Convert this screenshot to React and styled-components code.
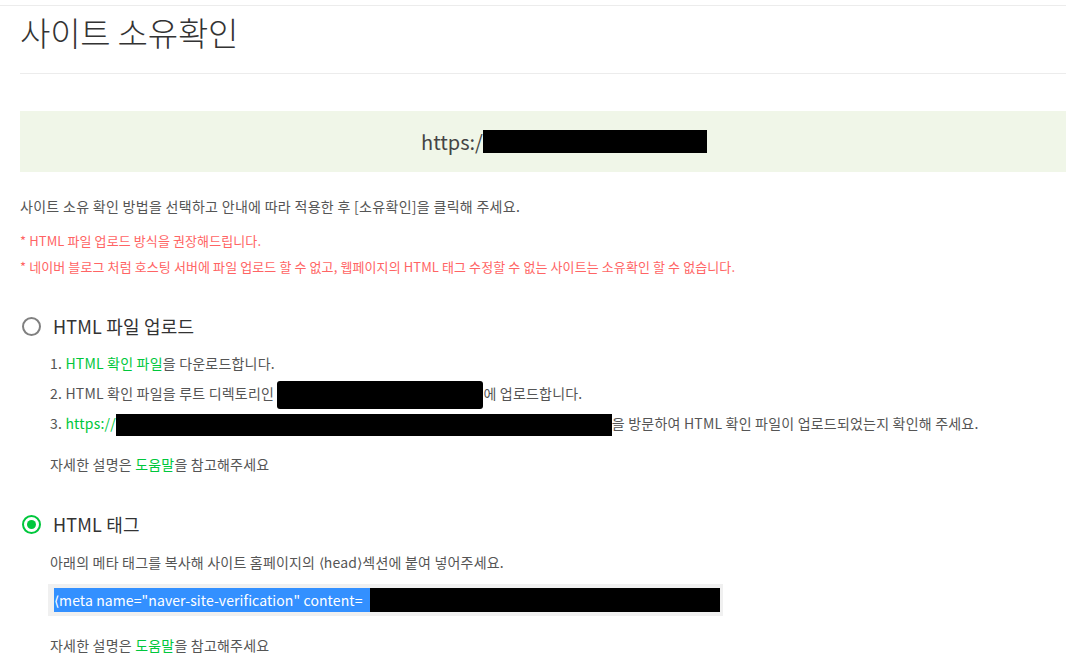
import React from 'react'
import styled, { createGlobalStyle } from 'styled-components'

const GlobalStyle = createGlobalStyle`
  body {
    margin: 0;
    background: #fff;
    font-family: "Noto Sans CJK KR", "Noto Sans", sans-serif;
  }
`

const Page = styled.div`
  margin-top: 5px;
  width: 1066px;
  border-top: 1px solid #ececec;
  padding-left: 20px;
  box-sizing: border-box;
`

const Header = styled.div`
  padding: 6px 0 21px;
  border-bottom: 1px solid #ececec;
`

const Title = styled.h1`
  margin: 0;
  font-size: 33px;
  line-height: 40px;
  font-weight: 300;
  color: #333;
  letter-spacing: -0.2px;
`

const UrlBox = styled.div`
  margin-top: 37px;
  height: 61px;
  background: #f0f6e8;
  display: flex;
  align-items: center;
  justify-content: center;
  padding-left: 42px;
  font-size: 20px;
  color: #444;
`

const Redact = styled.span`
  display: inline-block;
  background: #000;
  width: ${p => p.w}px;
  height: ${p => p.h}px;
  border-radius: ${p => (p.round ? '3px' : '0')};
  vertical-align: middle;
`

const Desc = styled.p`
  margin: 24px 0 0;
  font-size: 14px;
  line-height: 20px;
  color: #555;
  letter-spacing: 0.3px;
`

const Notes = styled.ul`
  list-style: none;
  margin: 12px 0 0;
  padding: 0;
`

const Note = styled.li`
  font-size: 13px;
  line-height: 26px;
  color: #ff6464;
  letter-spacing: 0.1px;
`

const Option = styled.div`
  margin-top: ${p => p.top}px;
`

const RadioRow = styled.label`
  display: flex;
  align-items: center;
  gap: 12px;
  height: 30px;
  font-size: 18px;
  color: #333;
  letter-spacing: 0.2px;
`

const Radio = styled.span`
  width: 19px;
  height: 19px;
  margin-left: 2px;
  box-sizing: border-box;
  border-radius: 50%;
  border: 2px solid ${p => (p.checked ? '#00c73c' : '#808080')};
  display: flex;
  align-items: center;
  justify-content: center;
  &::after {
    content: '';
    display: ${p => (p.checked ? 'block' : 'none')};
    width: 9px;
    height: 9px;
    border-radius: 50%;
    background: #00c73c;
  }
`

const Body = styled.div`
  padding-left: 30px;
`

const Steps = styled.ol`
  list-style: none;
  margin: 7px 0 0;
  padding: 0;
`

const Step = styled.li`
  font-size: 14px;
  line-height: 30px;
  height: 30px;
  color: #555;
  letter-spacing: 0.2px;
  white-space: nowrap;
`

const Green = styled.span`
  color: #00c73c;
`

const Help = styled.p`
  margin: ${p => p.top}px 0 0;
  font-size: 14px;
  line-height: 20px;
  color: #555;
  letter-spacing: 0.2px;
`

const CodeBox = styled.div`
  margin: 12px 0 0 -2px;
  width: 675px;
  height: 32px;
  box-sizing: border-box;
  background: #f0f0f0;
  padding: 4px 3px 4px 6px;
  display: flex;
  align-items: center;
`

const Selected = styled.span`
  background: #3390ff;
  color: #fff;
  font-size: 14px;
  line-height: 24px;
  letter-spacing: 0.1px;
  width: 316px;
  white-space: nowrap;
`

export default function App() {
  return (
    <>
      <GlobalStyle />
      <Page>
        <Header>
          <Title>사이트 소유확인</Title>
        </Header>

        <UrlBox>
          https:/<Redact w={224} h={23} />
        </UrlBox>

        <Desc>사이트 소유 확인 방법을 선택하고 안내에 따라 적용한 후 [소유확인]을 클릭해 주세요.</Desc>

        <Notes>
          <Note>* HTML 파일 업로드 방식을 권장해드립니다.</Note>
          <Note>* 네이버 블로그 처럼 호스팅 서버에 파일 업로드 할 수 없고, 웹페이지의 HTML 태그 수정할 수 없는 사이트는 소유확인 할 수 없습니다.</Note>
        </Notes>

        <Option top={31}>
          <RadioRow>
            <Radio />
            HTML 파일 업로드
          </RadioRow>
          <Body>
            <Steps>
              <Step>1. <Green>HTML 확인 파일</Green>을 다운로드합니다.</Step>
              <Step>2. HTML 확인 파일을 루트 디렉토리인 <Redact w={206} h={28} round />에 업로드합니다.</Step>
              <Step>3. <Green>https://</Green><Redact w={496} h={22} />을 방문하여 HTML 확인 파일이 업로드되었는지 확인해 주세요.</Step>
            </Steps>
            <Help top={16}>자세한 설명은 <Green>도움말</Green>을 참고해주세요</Help>
          </Body>
        </Option>

        <Option top={35}>
          <RadioRow>
            <Radio checked />
            HTML 태그
          </RadioRow>
          <Body>
            <Help top={13}>아래의 메타 태그를 복사해 사이트 홈페이지의 ⟨head⟩섹션에 붙여 넣어주세요.</Help>
            <CodeBox>
              <Selected>{'⟨meta name="naver-site-verification" content='}</Selected>
              <Redact w={350} h={24} />
            </CodeBox>
            <Help top={19}>자세한 설명은 <Green>도움말</Green>을 참고해주세요</Help>
          </Body>
        </Option>
      </Page>
    </>
  )
}
